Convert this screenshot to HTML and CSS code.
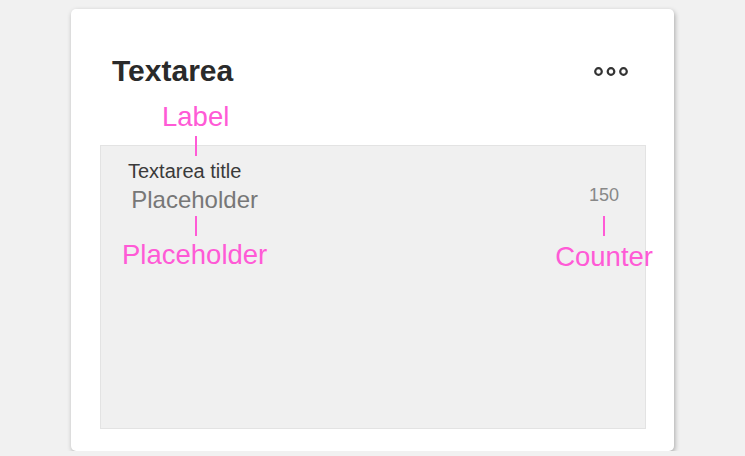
FILE: index.html
```html
<!DOCTYPE html>
<html lang="en">
<head>
  <meta charset="UTF-8">
  <meta name="viewport" content="width=device-width, initial-scale=1.0">
  <title>Textarea</title>
  <link rel="stylesheet" href="styles.css">
</head>
<body>
  <div class="card">
    <header class="card-header">
      <h1>Textarea</h1>
      <svg class="more" width="34" height="9" viewBox="0 0 34 9" aria-hidden="true">
        <circle cx="4.5" cy="4.5" r="3.3" />
        <circle cx="17" cy="4.5" r="3.3" />
        <circle cx="29.5" cy="4.5" r="3.3" />
      </svg>
    </header>

    <div class="note note-label">
      <span class="note-text">Label</span>
      <span class="tick"></span>
    </div>

    <div class="field">
      <div class="field-title">Textarea title</div>
      <div class="field-row">
        <div class="col col-placeholder">
          <span class="placeholder">Placeholder</span>
          <span class="tick"></span>
          <span class="note-text">Placeholder</span>
        </div>
        <div class="col col-counter">
          <span class="counter">150</span>
          <span class="tick"></span>
          <span class="note-text">Counter</span>
        </div>
      </div>
    </div>
  </div>
</body>
</html>
```

FILE: styles.css
```css
/* page */
body {
  font-family: 'Liberation Sans', Arial, sans-serif;
  margin: 0;
  padding: 0;
  background: #f1f1f1;
}

.card {
  width: 603px;
  height: 442px;
  box-sizing: border-box;
  margin: 9px auto 0;
  padding: 45px 28px 22px 29px;
  background: #ffffff;
  border-radius: 5px;
  box-shadow: 1px 2px 5px rgba(0, 0, 0, 0.3);
  display: flex;
  flex-direction: column;
}

.card-header {
  display: flex;
  justify-content: space-between;
  align-items: center;
  padding: 0 18px 0 12px;
}

.card-header h1 {
  margin: 0;
  font-size: 30px;
  line-height: 34px;
  font-weight: bold;
  color: #2a2a2a;
}

.more circle {
  fill: none;
  stroke: #333333;
  stroke-width: 2.2;
}

/* pink callouts */
.note-text {
  color: #ff5ad6;
  font-size: 27.5px;
  line-height: 30px;
  white-space: nowrap;
}

.tick {
  width: 2px;
  height: 20px;
  background: #ff5ad6;
}

.note {
  display: flex;
  flex-direction: column;
  align-items: center;
  align-self: flex-start;
  position: relative;
  z-index: 1;
}

.note-label {
  margin: 14px 0 -11px 62px;
}

.note-label .tick {
  margin-top: 4px;
}

/* textarea mock */
.field {
  flex: 1;
  background: #f0f0f0;
  border: 1px solid #e3e3e3;
  padding: 14px 27px 0 27px;
}

.field-title {
  font-size: 20px;
  line-height: 23px;
  color: #3a3a3a;
}

.field-row {
  display: flex;
  justify-content: space-between;
  align-items: flex-start;
  margin-top: 3px;
}

.col {
  display: flex;
  flex-direction: column;
  align-items: center;
}

.col-placeholder {
  margin-left: -6px;
}

.col-counter {
  margin-right: -35px;
}

.placeholder {
  font-size: 24px;
  line-height: 28px;
  color: #777777;
}

.col-placeholder .tick {
  margin-top: 2px;
  margin-left: 3px;
}

.col-placeholder .note-text {
  margin-top: 4px;
}

.counter {
  font-size: 18px;
  line-height: 19px;
  color: #888888;
}

.col-counter .tick {
  margin-top: 11px;
}

.col-counter .note-text {
  margin-top: 6px;
}
```
